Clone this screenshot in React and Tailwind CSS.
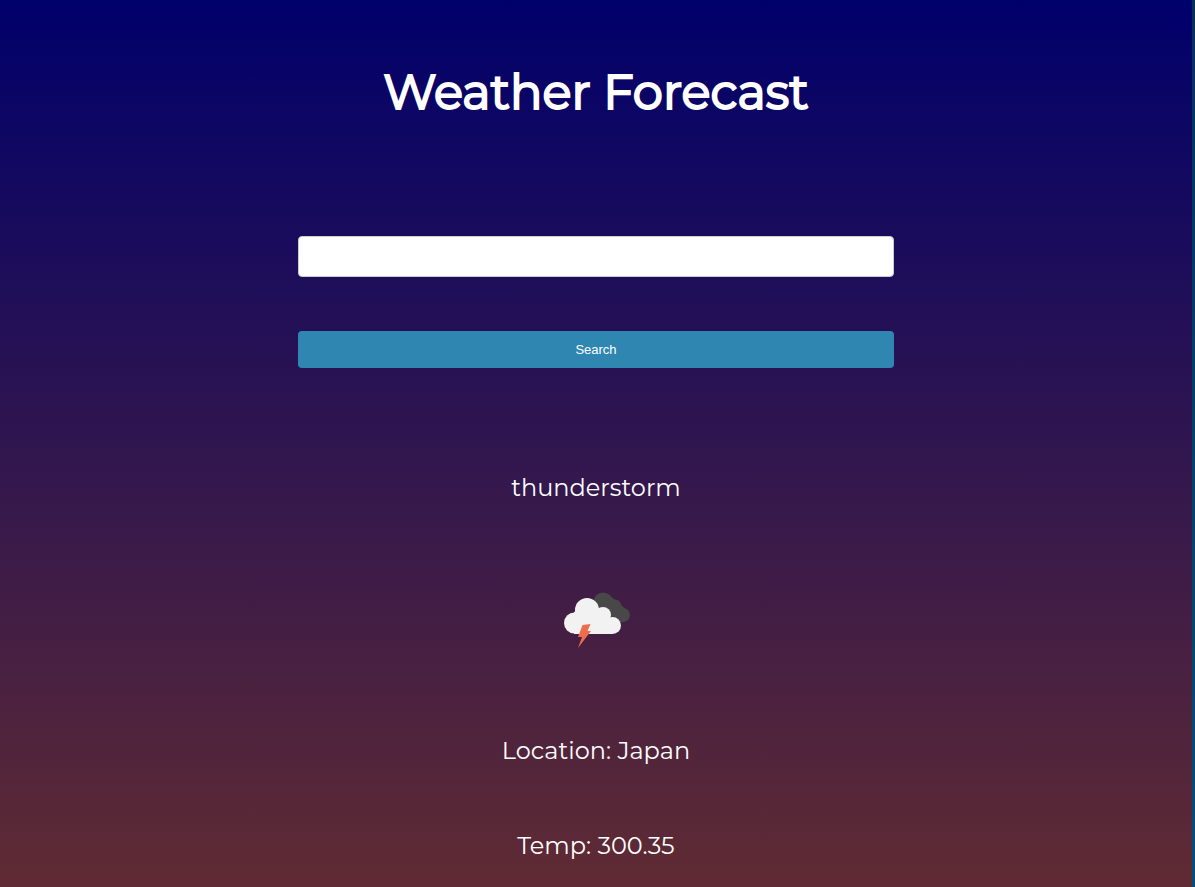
function StormIcon() {
  return (
    <svg viewBox="0 0 100 100" className="size-[100px]" role="img" aria-label="thunderstorm">
      <g fill="#484848">
        <circle cx="57" cy="34" r="9.500" />
        <circle cx="69" cy="38" r="6.500" />
        <circle cx="77" cy="47" r="7" />
        <path d="M50 35 62 26 82 43 78 54H60Z" />
      </g>
      <g fill="#f2f2f2">
        <circle cx="41" cy="42" r="12" />
        <circle cx="57" cy="47" r="8" />
        <circle cx="28.500" cy="55" r="10.500" />
        <circle cx="66.500" cy="57.500" r="8.500" />
        <path d="M28 44 41 37 59 45 66 52V66H28Z" />
      </g>
      <path d="M36.500 57 44.500 56 41.500 63H45L32 80 36 69H32Z" fill="#ec6e4c" />
    </svg>
  );
}

export default function App() {
  return (
    <div className="flex min-h-screen bg-[#064570] font-['Montserrat','Inter',sans-serif] text-white">
      <main className="flex flex-1 flex-col items-center bg-linear-to-b/srgb from-[#00006b] to-[#602b33] pt-16 pb-6">
        <h1 className="text-center text-5xl leading-14 font-normal [-webkit-text-stroke:2px_white]">
          Weather Forecast
        </h1>
        <form
          className="mt-29 flex w-1/2 flex-col gap-[54px]"
          onSubmit={(event) => event.preventDefault()}
        >
          <input
            type="text"
            aria-label="Location"
            className="h-[41px] rounded-[4px] border border-[#cccccc] bg-white px-5 text-sm text-black"
          />
          <button
            type="submit"
            className="h-[37px] rounded-[4px] bg-[#2e86b1] font-['Liberation_Sans',sans-serif] text-[13px] text-white"
          >
            Search
          </button>
        </form>
        <section className="mt-26 flex flex-col items-center text-2xl">
          <p>thunderstorm</p>
          <div className="mt-16">
            <StormIcon />
          </div>
          <p className="mt-[67px]">Location: Japan</p>
          <p className="mt-[63px]">Temp: 300.35</p>
        </section>
      </main>
      <div className="w-[3px] bg-linear-to-b/srgb from-[#06305c] to-[#064e78]" />
    </div>
  );
}
